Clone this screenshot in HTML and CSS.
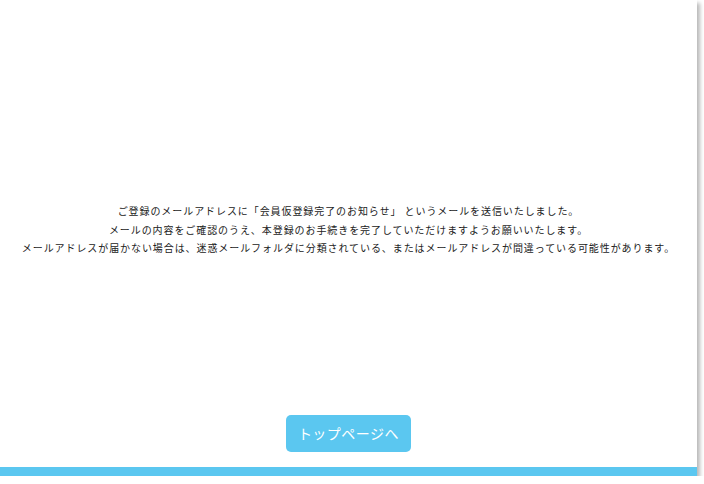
FILE: index.html
```html
<!DOCTYPE html>
<html lang="ja">
<head>
<meta charset="utf-8">
<title>仮登録完了</title>
<link rel="stylesheet" href="styles.css">
</head>
<body>
<div class="card">
  <div class="content">
    <div class="message">
      <p>ご登録のメールアドレスに「会員仮登録完了のお知らせ」 というメールを送信いたしました。</p>
      <p>メールの内容をご確認のうえ、本登録のお手続きを完了していただけますようお願いいたします。</p>
      <p>メールアドレスが届かない場合は、迷惑メールフォルダに分類されている、またはメールアドレスが間違っている可能性があります。</p>
    </div>
    <a class="btn" href="#">トップページへ</a>
  </div>
  <div class="bar"></div>
</div>
</body>
</html>
```

FILE: styles.css
```css
html, body {
  margin: 0;
  padding: 0;
  background: #ffffff;
}
body {
  font-family: "Noto Sans CJK JP", "Noto Sans", sans-serif;
  color: #222222;
}
.card {
  width: 697px;
  height: 476px;
  background: #ffffff;
  box-shadow: 3px 3px 4px rgba(0, 0, 0, 0.28);
  display: flex;
  flex-direction: column;
}
.content {
  flex: 1;
  display: flex;
  flex-direction: column;
  align-items: center;
  padding-top: 202px;
}
.message {
  text-align: center;
  font-size: 10px;
  line-height: 18.5px;
  letter-spacing: 0.92px;
}
.message p {
  margin: 0;
}
.btn {
  margin-top: 157px;
  width: 125px;
  height: 37px;
  border-radius: 5px;
  background: #5bc7f0;
  color: #ffffff;
  font-size: 14px;
  letter-spacing: 0.5px;
  text-decoration: none;
  display: flex;
  align-items: center;
  justify-content: center;
}
.bar {
  height: 9px;
  background: #5bc7f0;
}
```
